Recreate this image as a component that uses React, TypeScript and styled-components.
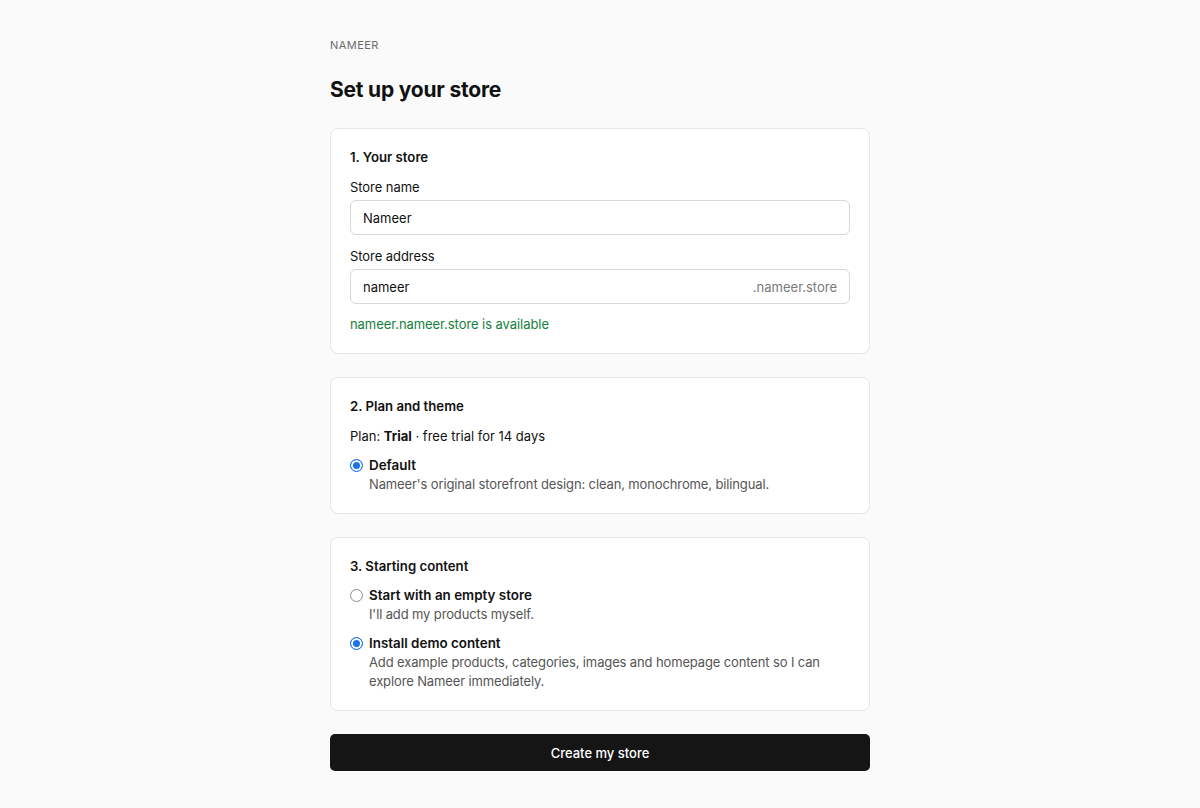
import React from 'react';
import styled, { createGlobalStyle } from 'styled-components';

const GlobalStyle = createGlobalStyle`
  * { box-sizing: border-box; }
  body {
    margin: 0;
    background: #fafafa;
    font-family: Inter, "Noto Sans", sans-serif;
    color: #111;
    -webkit-font-smoothing: antialiased;
  }
`

const Page = styled.main`
  width: 540px;
  margin: 0 auto;
  padding: 38px 0 40px;
`

const Brand = styled.div`
  font-size: 11px;
  letter-spacing: 0.04em;
  text-transform: uppercase;
  color: #6b6b6b;
  line-height: 14px;
`

const Title = styled.h1`
  margin: 23px 0 23px;
  font-size: 21px;
  font-weight: 700;
  letter-spacing: -0.01em;
  line-height: 30px;
`

const Card = styled.section`
  background: #fff;
  border: 1px solid #e6e6e6;
  border-radius: 8px;
  padding: 19px;
  margin-bottom: 23px;
`

const CardTitle = styled.h2`
  margin: 0 0 11px;
  font-size: 13.2px;
  font-weight: 600;
  line-height: 18px;
`

const Field = styled.div<{ $last?: boolean }>`
  display: flex;
  flex-direction: column;
  gap: 3px;
  margin-bottom: ${p => (p.$last ? '0' : '11px')};
`

const Label = styled.label`
  font-size: 13px;
  letter-spacing: -0.005em;
  line-height: 20px;
`

const InputBox = styled.div`
  display: flex;
  align-items: center;
  height: 35px;
  padding: 0 12px;
  border: 1px solid #d9d9d9;
  border-radius: 6px;
  font-size: 13px;
`

const Value = styled.span`
  flex: 1;
`

const Suffix = styled.span`
  color: #7a7a7a;
`

const Hint = styled.p`
  margin: 11px 0 0;
  font-size: 13px;
  letter-spacing: -0.005em;
  line-height: 19px;
  color: #15803d;
`

const PlanLine = styled.p`
  margin: 0 0 10px;
  font-size: 13px;
  line-height: 20px;
`

const Options = styled.div`
  display: flex;
  flex-direction: column;
  gap: 10px;
`

const Option = styled.label`
  display: flex;
  gap: 6px;
  align-items: flex-start;
`

const Radio = styled.span<{ $checked?: boolean }>`
  flex: none;
  width: 13px;
  height: 13px;
  margin-top: 3px;
  border-radius: 50%;
  border: 1px solid ${p => (p.$checked ? '#1a73e8' : '#8a8a8a')};
  background: ${p => (p.$checked ? '#1a73e8' : '#fff')};
  box-shadow: ${p => (p.$checked ? 'inset 0 0 0 2px #fff' : 'none')};
`

const OptionText = styled.div`
  display: flex;
  flex-direction: column;
`

const OptionTitle = styled.span`
  font-size: 13.4px;
  font-weight: 600;
  line-height: 19px;
`

const OptionDesc = styled.span`
  font-size: 13px;
  letter-spacing: -0.01em;
  line-height: 19px;
  color: #555;
`

const Submit = styled.button`
  display: block;
  width: 100%;
  height: 37px;
  border: 0;
  border-radius: 5px;
  background: #151515;
  color: #fff;
  font-family: inherit;
  font-size: 13px;
  font-weight: 500;
  cursor: pointer;
`

type OptionProps = {
    title: string
    desc: string
    checked?: boolean
}

const RadioOption = (props: OptionProps) => (
    <Option>
        <Radio $checked={props.checked}/>
        <OptionText>
            <OptionTitle>{props.title}</OptionTitle>
            <OptionDesc>{props.desc}</OptionDesc>
        </OptionText>
    </Option>
);

export default function App() {
    return (
        <>
            <GlobalStyle/>
            <Page>
                <Brand>Nameer</Brand>
                <Title>Set up your store</Title>

                <Card>
                    <CardTitle>1. Your store</CardTitle>
                    <Field>
                        <Label>Store name</Label>
                        <InputBox><Value>Nameer</Value></InputBox>
                    </Field>
                    <Field $last>
                        <Label>Store address</Label>
                        <InputBox>
                            <Value>nameer</Value>
                            <Suffix>.nameer.store</Suffix>
                        </InputBox>
                    </Field>
                    <Hint>nameer.nameer.store is available</Hint>
                </Card>

                <Card>
                    <CardTitle>2. Plan and theme</CardTitle>
                    <PlanLine>Plan: <b>Trial</b> · free trial for 14 days</PlanLine>
                    <RadioOption
                        checked
                        title="Default"
                        desc="Nameer's original storefront design: clean, monochrome, bilingual."
                    />
                </Card>

                <Card>
                    <CardTitle>3. Starting content</CardTitle>
                    <Options>
                        <RadioOption
                            title="Start with an empty store"
                            desc="I'll add my products myself."
                        />
                        <RadioOption
                            checked
                            title="Install demo content"
                            desc="Add example products, categories, images and homepage content so I can explore Nameer immediately."
                        />
                    </Options>
                </Card>

                <Submit>Create my store</Submit>
            </Page>
        </>
    );
}
